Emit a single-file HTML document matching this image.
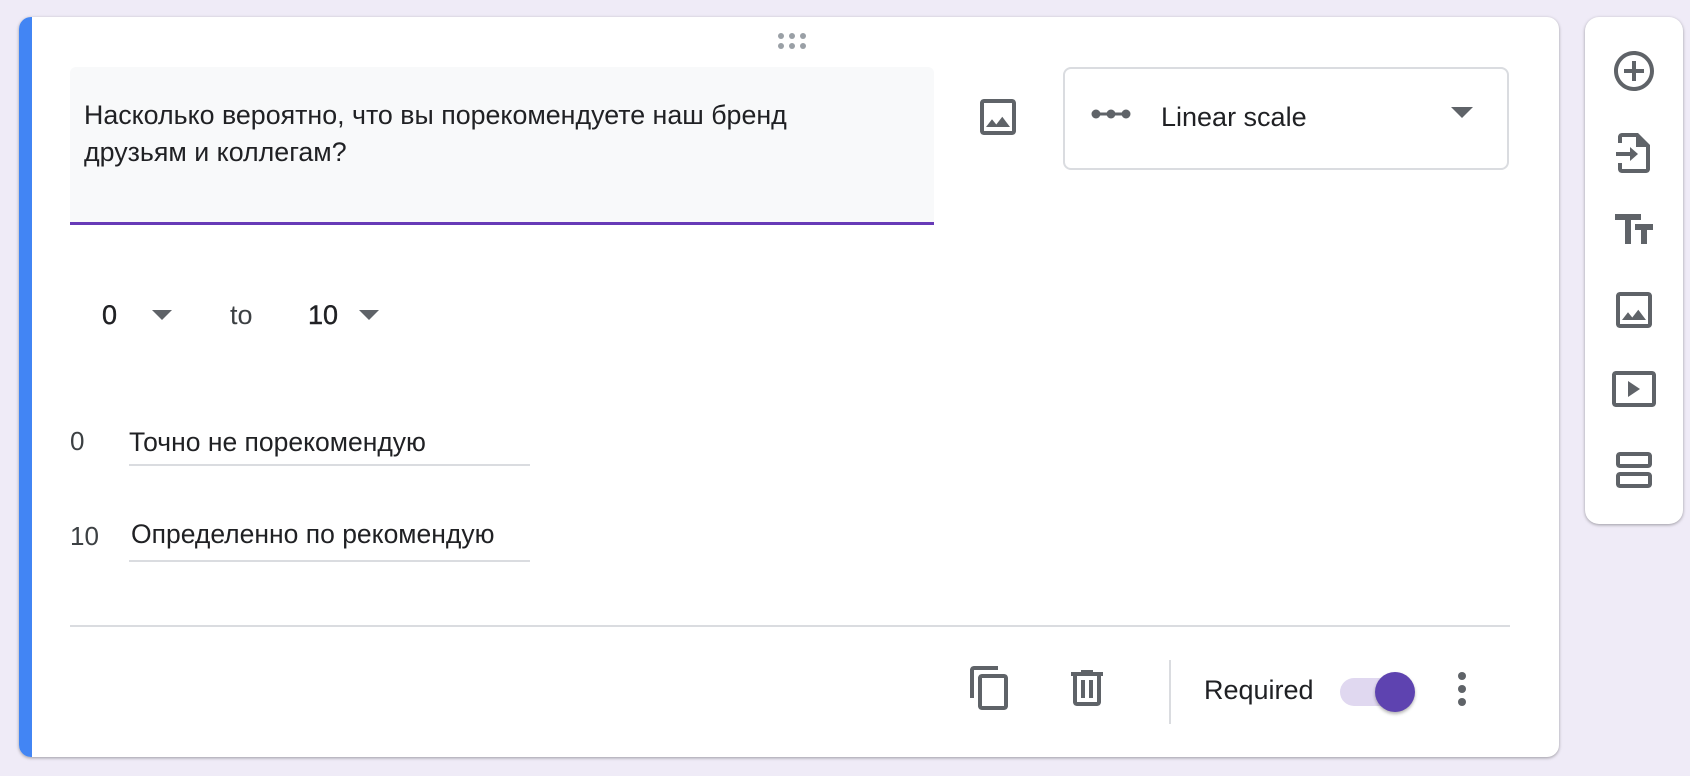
<!DOCTYPE html>
<html><head><meta charset="utf-8"><style>
*{margin:0;padding:0;box-sizing:border-box}
body{width:1690px;height:776px;background:#efebf7;font-family:"Liberation Sans",Arial,sans-serif;color:#202124;position:relative;overflow:hidden}
.card{position:absolute;left:19px;top:17px;width:1540px;height:740px;background:#fff;border-radius:12px;box-shadow:0 1px 3px rgba(0,0,0,.35);overflow:hidden}
.stripe{position:absolute;left:0;top:0;bottom:0;width:13px;background:#4285f4}
.abs{position:absolute}
.q{left:51px;top:50px;width:864px;height:158px;background:#f8f9fa;border-radius:6px 6px 0 0;border-bottom:3px solid #673ab7}
.q div{position:absolute;left:14px;top:30px;font-size:26.8px;line-height:37px;color:#202124}
.dd{left:1044px;top:50px;width:446px;height:103px;border:2px solid #dadce0;border-radius:8px}
.side{position:absolute;left:1585px;top:17px;width:98px;height:507px;background:#fff;border-radius:14px;box-shadow:0 1px 3px rgba(0,0,0,.35)}
svg{position:absolute}
.ln{position:absolute;height:2px;background:#dadce0}
</style></head><body>
<div class="card">
<div class="stripe"></div>
<svg style="left:757px;top:14px" width="32" height="20" viewBox="0 0 32 20" fill="#9aa0a6"><circle cx="5" cy="5" r="3"/><circle cx="16" cy="5" r="3"/><circle cx="27" cy="5" r="3"/><circle cx="5" cy="15" r="3"/><circle cx="16" cy="15" r="3"/><circle cx="27" cy="15" r="3"/></svg>
<div class="abs q"><div>Насколько вероятно, что вы порекомендуете наш бренд<br>друзьям и коллегам?</div></div>
<svg style="left:955px;top:76px" width="48" height="48" viewBox="0 0 24 24" fill="#5f6368"><path d="M19 5v14H5V5h14m0-2H5c-1.1 0-2 .9-2 2v14c0 1.1.9 2 2 2h14c1.1 0 2-.9 2-2V5c0-1.1-.9-2-2-2zm-4.86 8.86l-3 3.87L9 13.14 6 17h12l-3.86-5.14z"/></svg>
<div class="abs dd">
<svg style="left:26px;top:35px" width="40" height="20" viewBox="0 0 40 20"><line x1="4" y1="10" x2="36" y2="10" stroke="#5f6368" stroke-width="3"/><circle cx="5" cy="10" r="4.5" fill="#5f6368"/><circle cx="20" cy="10" r="4.5" fill="#5f6368"/><circle cx="35" cy="10" r="4.5" fill="#5f6368"/></svg>
<div class="abs" style="left:96px;top:33px;font-size:27px">Linear scale</div>
<svg style="left:386px;top:38px" width="22" height="12" viewBox="0 0 22 12"><path d="M0 0h22L11 11z" fill="#5f6368"/></svg>
</div>
<div class="abs" style="left:83px;top:283px;font-size:27px;color:#202124;-webkit-text-stroke:0.4px #202124">0</div>
<svg style="left:133px;top:293px" width="20" height="11"><path d="M0 0h20L10 10z" fill="#5f6368"/></svg>
<div class="abs" style="left:211px;top:283px;font-size:27px;color:#3c4043">to</div>
<div class="abs" style="left:289px;top:283px;font-size:27px;color:#202124;-webkit-text-stroke:0.4px #202124">10</div>
<svg style="left:340px;top:293px" width="20" height="11"><path d="M0 0h20L10 10z" fill="#5f6368"/></svg>
<div class="abs" style="left:51px;top:409px;font-size:26px;color:#3c4043">0</div>
<div class="abs" style="left:110px;top:410px;font-size:26.5px">Точно не порекомендую</div>
<div class="ln" style="left:110px;top:447px;width:401px"></div>
<div class="abs" style="left:51px;top:504px;font-size:26px;color:#3c4043">10</div>
<div class="abs" style="left:112px;top:502px;font-size:26.5px">Определенно по рекомендую</div>
<div class="ln" style="left:110px;top:543px;width:401px"></div>
<div class="ln" style="left:51px;top:608px;width:1440px"></div>
<svg style="left:949px;top:647px" width="48" height="48" viewBox="0 0 24 24" fill="#5f6368"><path d="M16 1H4c-1.1 0-2 .9-2 2v14h2V3h12V1zm3 4H8c-1.1 0-2 .9-2 2v14c0 1.1.9 2 2 2h11c1.1 0 2-.9 2-2V7c0-1.1-.9-2-2-2zm0 16H8V7h11v14z" transform="translate(-1 0)"/></svg>
<svg style="left:1044px;top:647px" width="48" height="48" viewBox="0 0 24 24" fill="#5f6368"><path d="M15 4V3H9v1H4v2h1v13c0 1.1.9 2 2 2h10c1.1 0 2-.9 2-2V6h1V4h-5zm2 15H7V6h10v13zM9 8h2v9H9zm4 0h2v9h-2z"/></svg>
<div class="abs" style="left:1150px;top:643px;width:2px;height:64px;background:#dadce0"></div>
<div class="abs" style="left:1185px;top:658px;font-size:27px;color:#202124">Required</div>
<div class="abs" style="left:1321px;top:661px;width:62px;height:28px;border-radius:14px;background:#e0d8f0"></div>
<div class="abs" style="left:1356px;top:655px;width:40px;height:40px;border-radius:50%;background:#5e43b0;box-shadow:0 2px 3px rgba(0,0,0,.3)"></div>
<svg style="left:1436px;top:652px" width="14" height="40" viewBox="0 0 14 40" fill="#5f6368"><circle cx="7" cy="7" r="4"/><circle cx="7" cy="20" r="4"/><circle cx="7" cy="33" r="4"/></svg>
</div>
<div class="side">
<svg style="left:25px;top:30px" width="48" height="48" viewBox="0 0 24 24" fill="#5f6368"><path d="M13 7h-2v4H7v2h4v4h2v-4h4v-2h-4V7zm-1-5C6.48 2 2 6.48 2 12s4.48 10 10 10 10-4.48 10-10S17.52 2 12 2zm0 18c-4.41 0-8-3.59-8-8s3.59-8 8-8 8 3.59 8 8-3.59 8-8 8z"/></svg>
<svg style="left:25px;top:112px" width="48" height="48" viewBox="0 0 24 24" fill="#5f6368"><path d="M14 2H6c-1.1 0-2 .9-2 2v3h2V4h7v5h5v11H6v-3H4v3c0 1.1.9 2 2 2h12c1.1 0 2-.9 2-2V8l-6-6zM10 16l4-3.5-4-3.5v2.5H3v2h7z"/></svg>
<svg style="left:25px;top:189px" width="48" height="48" viewBox="0 0 24 24" fill="#5f6368"><path d="M2.5 4v3h5v12h3V7h5V4h-13zm19 5h-9v3h3v7h3v-7h3V9z"/></svg>
<svg style="left:25px;top:269px" width="48" height="48" viewBox="0 0 24 24" fill="#5f6368"><path d="M19 5v14H5V5h14m0-2H5c-1.1 0-2 .9-2 2v14c0 1.1.9 2 2 2h14c1.1 0 2-.9 2-2V5c0-1.1-.9-2-2-2zm-4.86 8.86l-3 3.87L9 13.14 6 17h12l-3.86-5.14z"/></svg>
<svg style="left:25px;top:348px" width="48" height="48" viewBox="0 0 24 24" fill="#5f6368"><path d="M21 3H3c-1.1 0-2 .9-2 2v14c0 1.1.9 2 2 2h18c1.1 0 2-.9 2-2V5c0-1.1-.9-2-2-2zm0 16H3V5h18v14zM9 8v8l6-4z"/></svg>
<svg style="left:25px;top:429px" width="48" height="48" viewBox="0 0 24 24" fill="#5f6368"><path d="M19 13H5c-1.1 0-2 .9-2 2v4c0 1.1.9 2 2 2h14c1.1 0 2-.9 2-2v-4c0-1.1-.9-2-2-2zm0 6H5v-4h14v4zm0-16H5c-1.1 0-2 .9-2 2v4c0 1.1.9 2 2 2h14c1.1 0 2-.9 2-2V5c0-1.1-.9-2-2-2zm0 6H5V5h14v4z"/></svg>
</div>
</body></html>
